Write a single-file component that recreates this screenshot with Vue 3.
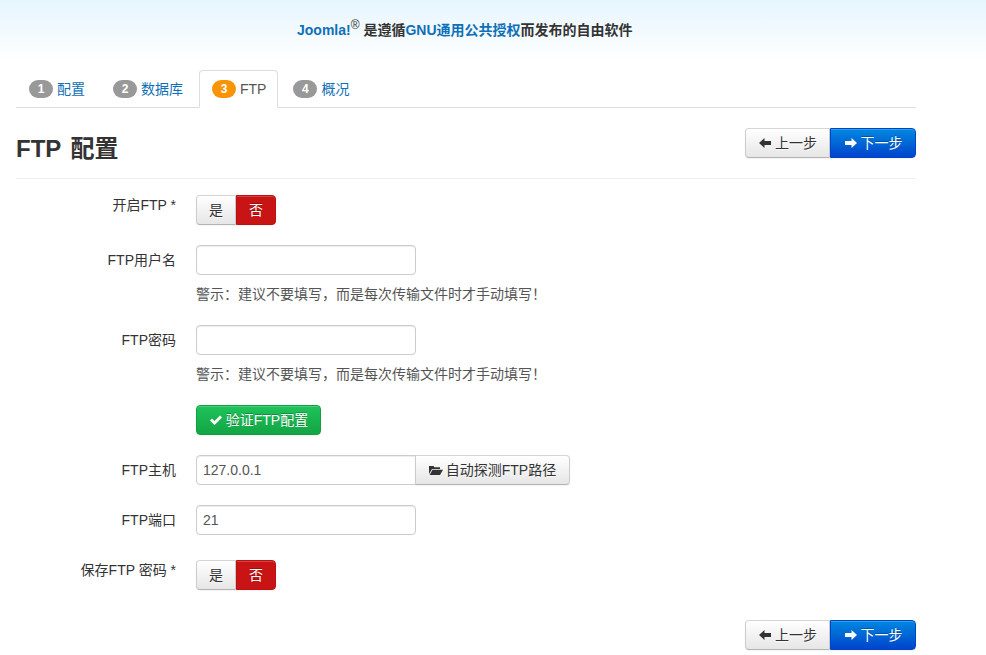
<script setup>
const steps = [
  { num: 1, label: '配置' },
  { num: 2, label: '数据库' },
  { num: 3, label: 'FTP', active: true },
  { num: 4, label: '概况' },
];
const warning = '警示：建议不要填写，而是每次传输文件时才手动填写！';
</script>

<template>
  <div class="page">
    <div class="header">
      <a class="link">Joomla!</a><sup class="reg">®</sup>&nbsp;是遵循<a class="link">GNU通用公共授权</a>而发布的自由软件
    </div>

    <div class="container">
      <ul class="tabs">
        <li v-for="step in steps" :key="step.num" class="tab" :class="{ active: step.active }">
          <span class="badge">{{ step.num }}</span>
          <span class="tab-label">{{ step.label }}</span>
        </li>
      </ul>

      <div class="title-row">
        <h3>FTP 配置</h3>
        <div class="btn-group">
          <button class="btn">
            <svg class="icon" viewBox="0 0 14 14"><path d="M1 7l5.500-5v3H13v4H6.500v3z" fill="#333" /></svg>
            上一步
          </button>
          <button class="btn primary">
            <svg class="icon" viewBox="0 0 14 14"><path d="M13 7L7.500 2v3H1v4h6.500v3z" fill="#fff" /></svg>
            下一步
          </button>
        </div>
      </div>
      <div class="rule"></div>

      <form class="form" @submit.prevent>
        <div class="row">
          <label class="label">开启FTP *</label>
          <div class="switcher">
            <button class="btn switch-btn">是</button>
            <button class="btn switch-btn danger">否</button>
          </div>
        </div>

        <div class="row">
          <label class="label">FTP用户名</label>
          <div class="controls">
            <input class="input" type="text" />
            <p class="help">{{ warning }}</p>
          </div>
        </div>

        <div class="row">
          <label class="label">FTP密码</label>
          <div class="controls">
            <input class="input" type="password" />
            <p class="help">{{ warning }}</p>
          </div>
        </div>

        <div class="row">
          <div class="label"></div>
          <button class="btn success">
            <svg class="icon" viewBox="0 0 14 14"><path d="M1 7.500l2-2 2.500 2.500L11 2.500l2 2L5.500 12z" fill="#fff" /></svg>
            验证FTP配置
          </button>
        </div>

        <div class="row">
          <label class="label">FTP主机</label>
          <div class="input-append">
            <input class="input" type="text" value="127.0.0.1" />
            <button class="btn add-on">
              <svg class="icon" viewBox="0 0 14 14"><path d="M0 11V3h4.500l1 1.200H11V6H3L0 11zM3.500 6.800H14L11 12H.6z" fill="#333" /></svg>
              自动探测FTP路径
            </button>
          </div>
        </div>

        <div class="row">
          <label class="label">FTP端口</label>
          <input class="input" type="text" value="21" />
        </div>

        <div class="row last">
          <label class="label">保存FTP 密码 *</label>
          <div class="switcher">
            <button class="btn switch-btn">是</button>
            <button class="btn switch-btn danger">否</button>
          </div>
        </div>
      </form>

      <div class="bottom-actions">
        <div class="btn-group">
          <button class="btn">
            <svg class="icon" viewBox="0 0 14 14"><path d="M1 7l5.500-5v3H13v4H6.500v3z" fill="#333" /></svg>
            上一步
          </button>
          <button class="btn primary">
            <svg class="icon" viewBox="0 0 14 14"><path d="M13 7L7.500 2v3H1v4h6.500v3z" fill="#fff" /></svg>
            下一步
          </button>
        </div>
      </div>
    </div>
  </div>
</template>

<style>
body {
  background: #fff;
}
</style>

<style scoped>
.page {
  height: 655px;
  overflow: hidden;
  font-family: "Liberation Sans", "Noto Sans CJK SC", sans-serif;
  font-size: 14px;
  line-height: 18px;
  color: #333;
  background: linear-gradient(#e6f5fe 0, #fff 62px);
}

.header {
  height: 60px;
  padding-left: 297px;
  line-height: 60px;
  font-weight: bold;
  box-sizing: border-box;
}

.link {
  color: #0f70b7;
}

.reg {
  font-size: 12px;
  font-weight: normal;
  line-height: 0;
  vertical-align: 6px;
}

.container {
  width: 900px;
  margin-left: 16px;
}

.tabs {
  display: flex;
  list-style: none;
  margin: 10px 0 0;
  padding: 0;
  height: 37px;
  border-bottom: 1px solid #ddd;
}

.tab {
  display: flex;
  align-items: center;
  gap: 4px;
  height: 38px;
  padding: 0 11px 0 12px;
  margin-right: 3px;
  color: #0f70b7;
  border: 1px solid transparent;
  border-radius: 4px 4px 0 0;
  box-sizing: border-box;
}

.tab.active {
  margin-left: 1px;
  margin-right: 2px;
  color: #555;
  background: #fff;
  border-color: #ddd;
  border-bottom-color: #fff;
}

.badge {
  width: 24px;
  height: 18px;
  border-radius: 9px;
  background: #999;
  color: #fff;
  font-size: 12px;
  font-weight: bold;
  line-height: 18px;
  text-align: center;
}

.active .badge {
  background: #f89406;
}

.title-row {
  display: flex;
  justify-content: space-between;
  align-items: flex-start;
  height: 70px;
  padding-top: 20px;
  box-sizing: border-box;
}

h3 {
  margin: 6px 0 0;
  font-size: 24px;
  line-height: 30px;
  font-weight: bold;
  color: #333;
  word-spacing: 3px;
}

.rule {
  height: 1px;
  background: #eee;
}

.form {
  padding-top: 16px;
}

.row {
  display: flex;
  align-items: flex-start;
  margin-bottom: 20px;
}

.row.last {
  margin-top: 25px;
  margin-bottom: 30px;
}

.label {
  width: 160px;
  padding-top: 1px;
  text-align: right;
  margin-right: 20px;
  line-height: 18px;
  flex: none;
}

.row:not(:first-child) .label {
  padding-top: 6px;
}

.row.last .label {
  padding-top: 1px;
}

.controls {
  display: flex;
  flex-direction: column;
}

.input {
  width: 220px;
  height: 30px;
  padding: 4px 6px;
  box-sizing: border-box;
  border: 1px solid #ccc;
  border-radius: 4px;
  box-shadow: inset 0 1px 1px rgba(0, 0, 0, 0.075);
  font: inherit;
  color: #555;
  background: #fff;
  outline: none;
}

.help {
  margin: 10px 0 0;
  height: 20px;
  color: #555;
}

.btn {
  display: inline-flex;
  align-items: center;
  justify-content: center;
  gap: 3px;
  height: 30px;
  padding: 0 14px;
  box-sizing: border-box;
  font: inherit;
  color: #333;
  text-shadow: 0 1px 1px rgba(255, 255, 255, 0.75);
  background: linear-gradient(#fff, #e6e6e6);
  border: 1px solid #bbb;
  border-color: #d5d5d5 #ccc #b3b3b3;
  border-radius: 4px;
  box-shadow: inset 0 1px 0 rgba(255, 255, 255, 0.2), 0 1px 2px rgba(0, 0, 0, 0.05);
}

.icon {
  width: 14px;
  height: 14px;
  flex: none;
}

.btn-group {
  display: flex;
}

.btn-group .btn {
  width: 85px;
  padding: 0;
  border-radius: 4px 0 0 4px;
}

.btn-group .primary {
  width: 86px;
  color: #fff;
  text-shadow: 0 -1px 0 rgba(0, 0, 0, 0.25);
  background: linear-gradient(#0088e0, #0044cc);
  border: 1px solid #0044cc;
  border-radius: 0 4px 4px 0;
}

.switcher {
  display: flex;
}

.switch-btn {
  width: 40px;
  padding: 0;
  border-radius: 4px 0 0 4px;
}

.switch-btn.danger {
  color: #fff;
  text-shadow: 0 -1px 0 rgba(0, 0, 0, 0.25);
  background: #c81414;
  border: 1px solid #bd1010;
  border-radius: 0 4px 4px 0;
}

.success {
  width: 125px;
  padding: 0;
  color: #fff;
  text-shadow: 0 -1px 0 rgba(0, 0, 0, 0.25);
  background: linear-gradient(#1fc35a, #12a544);
  border: 1px solid #12a03f;
}

.input-append {
  display: flex;
}

.input-append .input {
  border-radius: 4px 0 0 4px;
}

.add-on {
  width: 155px;
  padding: 0;
  margin-left: -1px;
  border-radius: 0 4px 4px 0;
}

.bottom-actions {
  display: flex;
  justify-content: flex-end;
}
</style>
